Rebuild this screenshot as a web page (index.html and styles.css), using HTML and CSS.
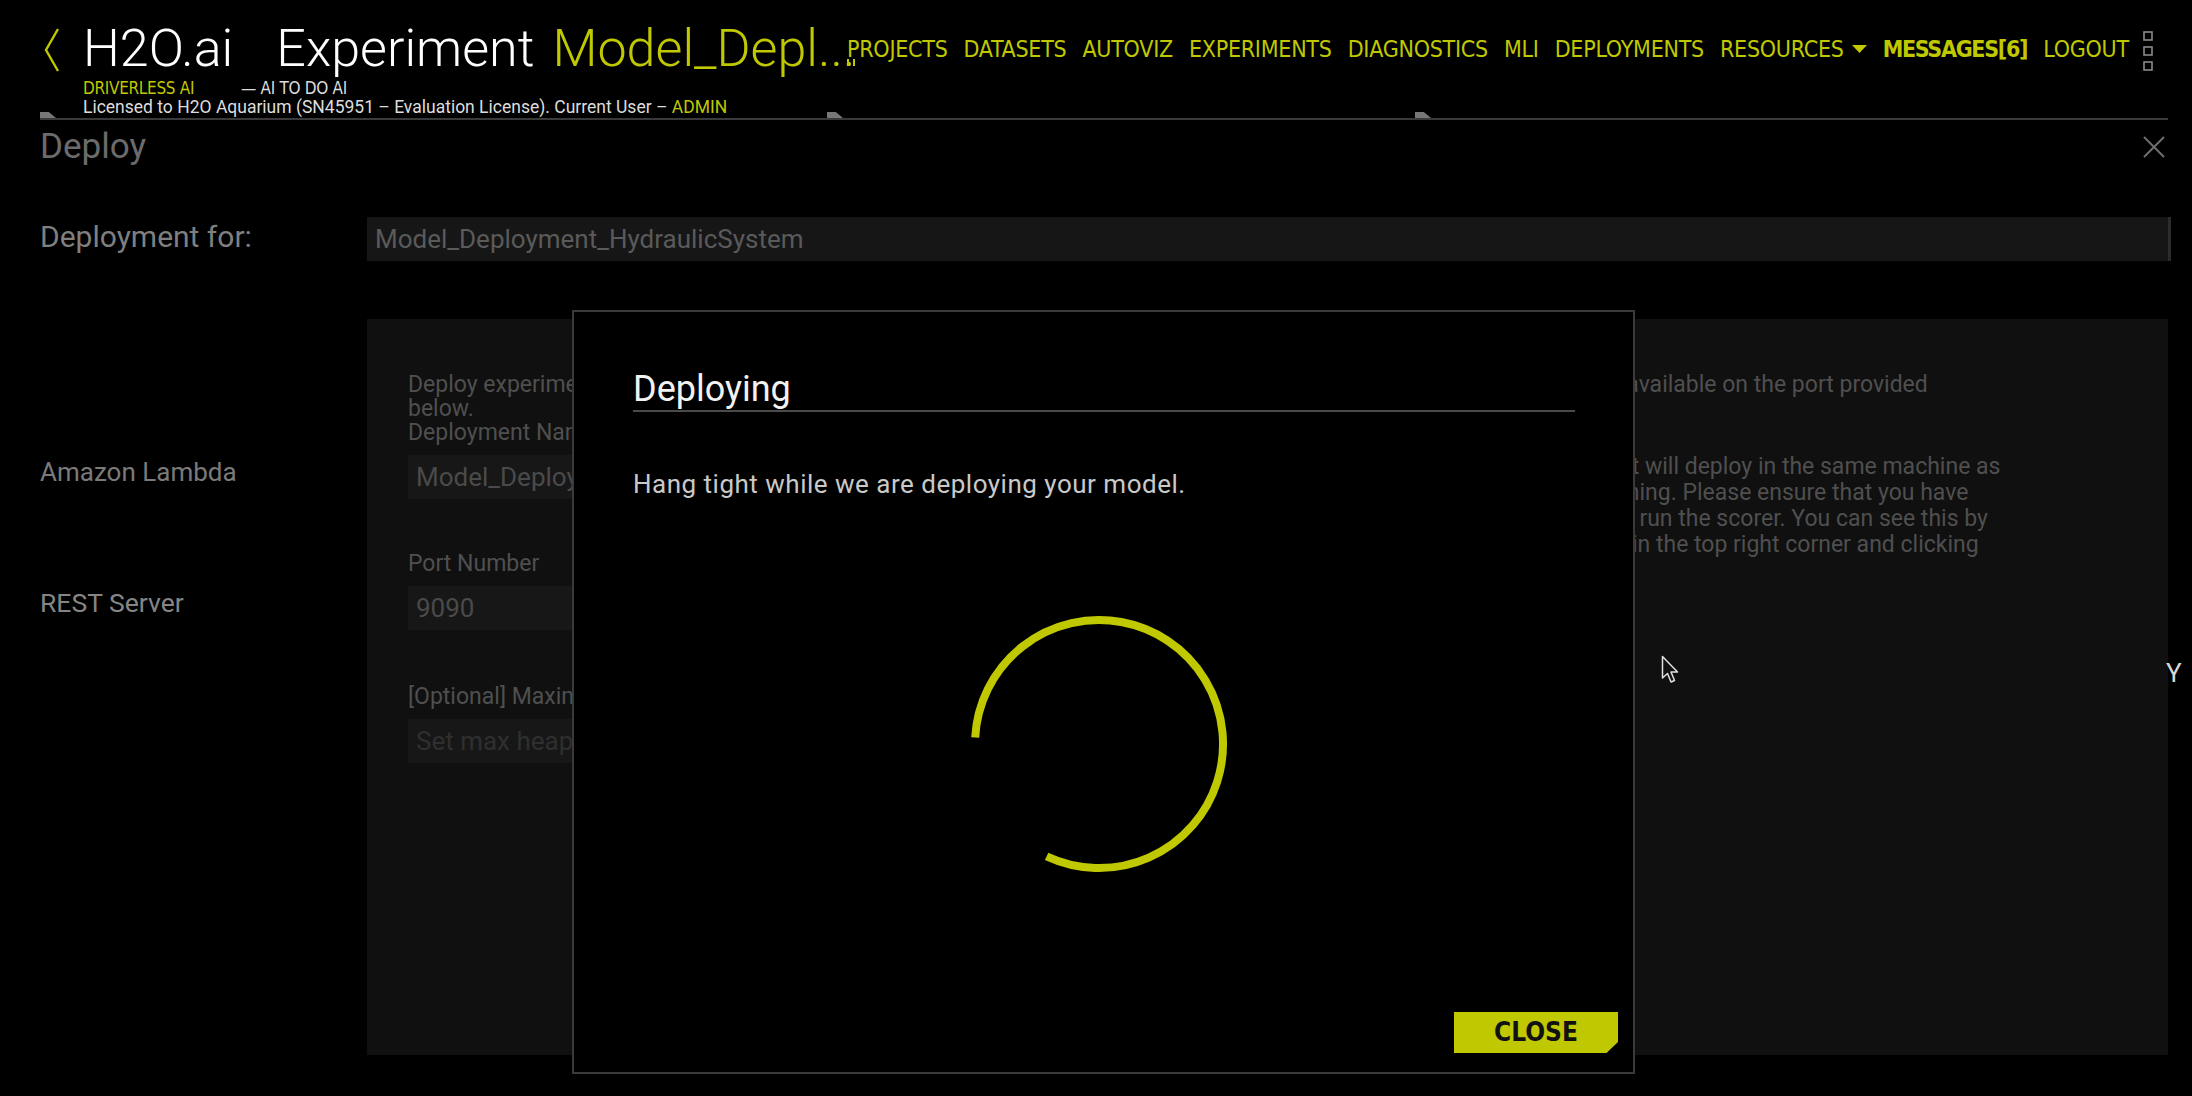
FILE: index.html
```html
<!DOCTYPE html>
<html>
<head>
<meta charset="utf-8">
<title>Deploy</title>
<link rel="stylesheet" href="styles.css">
</head>
<body>
<div class="page">
  <header class="topbar">
    <div class="brand">
      <svg class="chev" viewBox="0 0 16 46"><polyline points="14,2 2,23 14,44" fill="none" stroke="#bfc800" stroke-width="2.4"/></svg>
      <div class="brand-text">
        <div class="title-line"><span class="logo">H2O.ai</span><span class="exp">Experiment</span><span class="exp-name">Model_Depl...</span></div>
        <div class="sub1"><span class="dai">DRIVERLESS AI</span><span class="tag">— AI TO DO AI</span></div>
        <div class="sub2">Licensed to H2O Aquarium (SN45951 – Evaluation License). Current User – <span class="admin">ADMIN</span></div>
      </div>
    </div>
    <nav class="nav">
      <span>PROJECTS</span>
      <span>DATASETS</span>
      <span>AUTOVIZ</span>
      <span>EXPERIMENTS</span>
      <span>DIAGNOSTICS</span>
      <span>MLI</span>
      <span>DEPLOYMENTS</span>
      <span class="res">RESOURCES<svg class="caret" viewBox="0 0 15 8"><polygon points="0,0 15,0 7.5,8" fill="#bfc800"/></svg></span>
      <span class="msg">MESSAGES[6]</span>
      <span>LOGOUT</span>
    </nav>
    <svg class="more" viewBox="0 0 10 40"><rect x="1" y="1" width="8" height="8" fill="none" stroke="#8a8a8a" stroke-width="1.6"/><rect x="1" y="16" width="8" height="8" fill="none" stroke="#8a8a8a" stroke-width="1.6"/><rect x="1" y="31" width="8" height="8" fill="none" stroke="#8a8a8a" stroke-width="1.6"/></svg>
    <span class="marks"></span>
    <span class="tab t1"></span>
    <span class="tab t2"></span>
    <span class="tab t3"></span>
  </header>

  <div class="deploy-head">
    <h1>Deploy</h1>
    <svg class="x" viewBox="0 0 22 22"><path d="M1 1 L21 21 M21 1 L1 21" stroke="#6e6e6e" stroke-width="2" fill="none"/></svg>
  </div>

  <div class="row row-for">
    <div class="label">Deployment for:</div>
    <div class="field wide">Model_Deployment_HydraulicSystem</div>
  </div>

  <div class="row row-main">
    <div class="targets">
      <div class="target">Amazon Lambda</div>
      <div class="target rest">REST Server</div>
    </div>
    <div class="panel">
      <p class="intro">Deploy experiment as a REST server. The scorer will be created on the same machine as Driverless AI and it will then be available on the port provided<br>below.</p>
      <div class="cols">
        <div class="fields">
          <div class="flabel">Deployment Name</div>
          <div class="field">Model_Deployment_HydraulicSystem</div>
          <div class="flabel gap">Port Number</div>
          <div class="field">9090</div>
          <div class="flabel gap2">[Optional] Maximum heap size (GB)</div>
          <div class="field ph">Set max heap size</div>
        </div>
        <div class="note">
          <div>Please note that this deployment will deploy in the same machine as</div>
          <div>the Driverless AI is currently running. Please ensure that you have</div>
          <div>sufficient memory is available to run the scorer. You can see this by</div>
          <div>clicking on the system info icon in the top right corner and clicking</div>
        </div>
      </div>
    </div>
  </div>
</div>

<div class="modal">
  <div class="modal-head">Deploying</div>
  <div class="modal-text">Hang tight while we are deploying your model.</div>
  <svg class="spinner" viewBox="0 0 264 264"><path d="M8.2 125.5 A124 124 0 1 1 79.6 244.4" fill="none" stroke="#bfc800" stroke-width="8"/></svg>
  <div class="modal-foot"><div class="btn">CLOSE</div></div>
</div>

<span class="stray">Y</span>
<svg class="cursor" viewBox="0 0 20 30"><path d="M1.5 1.5 L1.5 23 L6.5 18.5 L10 27 L13.5 25.5 L10 17 L16.5 17 Z" fill="#111" stroke="#e0e0e0" stroke-width="1.5" stroke-linejoin="round"/></svg>
</body>
</html>
```

FILE: styles.css
```css
* { box-sizing: border-box; }
html, body { margin: 0; padding: 0; background: #000; }
body {
  font-family: Roboto, "Liberation Sans", sans-serif;
  color: #ccc;
  width: 2192px;
  height: 1096px;
  overflow: hidden;
  position: relative;
}
.page { padding: 0 24px 0 40px; }

/* header */
.topbar {
  position: relative;
  display: flex;
  align-items: flex-start;
  height: 120px;
  border-bottom: 2px solid #3a3a3a;
}
.brand { display: flex; width: 807px; flex: none; white-space: nowrap; }
.chev { width: 16px; height: 46px; margin: 27px 0 0 4px; flex: none; }
.brand-text { margin-left: 23px; padding-top: 23px; }
.title-line {
  display: flex;
  font-size: 52px;
  line-height: 52px;
  font-weight: 300;
  color: #fff;
}
.exp { margin-left: 43px; }
.exp-name { color: #bfc800; margin-left: 18px; }
.sub1 {
  display: flex;
  font-family: "Liberation Sans Narrow", "DejaVu Sans Condensed", sans-serif;
  font-size: 17px;
  line-height: 18px;
  letter-spacing: -0.3px;
  margin-top: 4px;
  color: #bfc800;
}
.dai { width: 158px; }
.tag { color: #ddd; }
.sub2 { font-size: 17.5px; line-height: 18px; margin-top: 1px; color: #ddd; }
.admin { color: #bfc800; }

.nav {
  display: flex;
  align-items: center;
  gap: 16px;
  margin-top: 37px;
  font-family: "Liberation Sans Narrow", "DejaVu Sans Condensed", sans-serif;
  font-size: 23px;
  line-height: 24px;
  letter-spacing: -0.25px;
  color: #bfc800;
  white-space: nowrap;
}
.res { display: flex; align-items: center; }
.caret { width: 15px; height: 8px; margin-left: 8px; }
.msg { font-weight: 700; letter-spacing: -1.3px; }
.more { width: 10px; height: 40px; margin: 31px 0 0 14px; flex: none; }

.marks {
  position: absolute;
  left: 807px;
  top: 59px;
  width: 8px;
  height: 7px;
  background: linear-gradient(90deg, #bfc800 0 2px, transparent 2px 6px, #bfc800 6px 8px);
}
.tab {
  position: absolute;
  bottom: 0;
  width: 16px;
  height: 6px;
  background: #777;
  clip-path: polygon(0 100%, 0 0, 55% 0, 100% 100%);
}
.t1 { left: 0; }
.t2 { left: 787px; }
.t3 { left: 1375px; }

/* deploy page */
.deploy-head {
  display: flex;
  justify-content: space-between;
  align-items: flex-start;
  margin-top: 10px;
}
.deploy-head h1 {
  margin: 0;
  font-size: 35px;
  line-height: 34px;
  font-weight: 400;
  color: #6b6b6b;
}
.x { width: 22px; height: 22px; margin: 6px 3px 0 0; }

.row { display: flex; }
.row-for { margin-top: 53px; }
.label {
  width: 327px;
  flex: none;
  font-size: 30px;
  line-height: 30px;
  padding-top: 5px;
  color: #7f7f7f;
}
.field {
  height: 44px;
  background: #161616;
  font-size: 26px;
  line-height: 44px;
  padding-left: 8px;
  color: #5a5a5a;
  white-space: nowrap;
  overflow: hidden;
}
.wide { flex: 1; border-right: 3px solid #2c2c2c; margin-right: -3px; }

.row-main { margin-top: 58px; }
.targets { width: 327px; flex: none; padding-top: 141px; }
.target { font-size: 26px; line-height: 25px; color: #7a7a7a; }
.target.rest { margin-top: 105px; font-size: 26.5px; line-height: 26px; color: #858585; }

.panel {
  flex: 1;
  height: 736px;
  background: #101010;
  padding: 54px 0 0 41px;
  overflow: hidden;
}
.intro {
  margin: 0;
  font-size: 23px;
  line-height: 24px;
  color: #4f4f4f;
  white-space: nowrap;
}
.cols { display: flex; }
.fields { width: 600px; flex: none; }
.flabel { font-size: 23px; line-height: 24px; color: #4f4f4f; }
.fields .field { margin-top: 10px; background: #171717; color: #4a4a4a; }
.flabel.gap { margin-top: 53px; }
.flabel.gap2 { margin-top: 55px; }
.fields .field.ph { color: #2f2f2f; }
.note {
  margin: 33px 0 0 296px;
  font-size: 23px;
  line-height: 26px;
  color: #4f4f4f;
  white-space: nowrap;
}

/* modal */
.modal {
  position: absolute;
  left: 572px;
  top: 310px;
  width: 1063px;
  height: 764px;
  background: #000;
  border: 2px solid #3a3a3a;
  display: flex;
  flex-direction: column;
}
.modal-head {
  margin: 59px 58px 0 59px;
  font-size: 36px;
  line-height: 36px;
  color: #f2f2f2;
  padding-bottom: 3px;
  border-bottom: 2px solid #4a4a4a;
}
.modal-text {
  margin: 60px 58px 0 59px;
  font-size: 26px;
  line-height: 25px;
  letter-spacing: 0.5px;
  color: #c9c9c9;
}
.spinner { width: 264px; height: 264px; margin: 115px 0 0 393px; flex: none; }
.modal-foot {
  margin-top: auto;
  display: flex;
  justify-content: flex-end;
  padding: 0 15px 19px 0;
}
.btn {
  width: 164px;
  height: 41px;
  background: #bfc800;
  clip-path: polygon(0 0, 100% 0, 100% 73%, 93% 100%, 0 100%);
  font-family: "Liberation Sans Narrow", "DejaVu Sans Condensed", sans-serif;
  font-weight: 700;
  font-size: 26px;
  line-height: 41px;
  text-align: center;
  color: #111;
}

.stray {
  position: absolute;
  left: 2166px;
  top: 660px;
  font-size: 26px;
  line-height: 26px;
  color: #d8d8d8;
}
.cursor { position: absolute; left: 1661px; top: 655px; width: 20px; height: 30px; }
```
